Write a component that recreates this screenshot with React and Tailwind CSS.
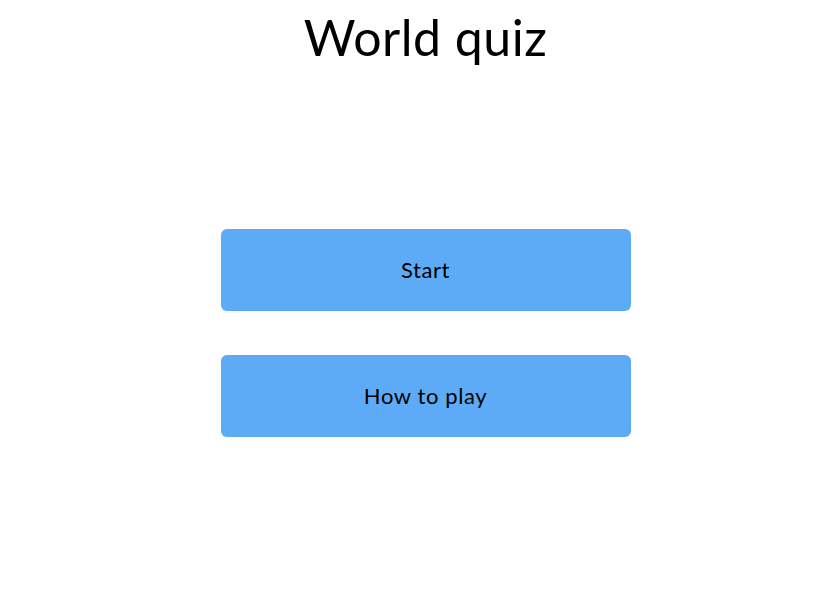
export default function App() {
  return (
    <div className="min-h-[615px] w-full bg-white pl-[27px] font-['Lato','Liberation_Sans',sans-serif] text-black">
      <div className="flex flex-col items-center">
        <h1 className="mt-[5px] text-[50px] leading-[64px] font-normal tracking-[0.5px]">World quiz</h1>
        <div className="mt-[160px] flex flex-col gap-[44px]">
          <button className="flex h-[82px] w-[410px] items-center justify-center rounded-[6px] bg-[#5dabf6] pb-[2px] text-[22px] tracking-[0.6px]">
            Start
          </button>
          <button className="flex h-[82px] w-[410px] items-center justify-center rounded-[6px] bg-[#5dabf6] pb-[2px] text-[22px] tracking-[0.6px]">
            How to play
          </button>
        </div>
      </div>
    </div>
  )
}
